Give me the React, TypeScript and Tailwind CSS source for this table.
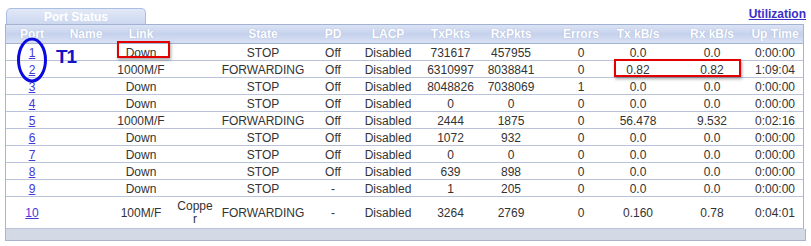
import React from "react";

type Row = {
  port: string;
  link: string;
  media?: boolean;
  state: string;
  pd: string;
  tx: string;
  rx: string;
  err: string;
  txk: string;
  rxk: string;
  up: string;
};

const rows: Row[] = [
  { port: "1", link: "Down", state: "STOP", pd: "Off", tx: "731617", rx: "457955", err: "0", txk: "0.0", rxk: "0.0", up: "0:00:00" },
  { port: "2", link: "1000M/F", state: "FORWARDING", pd: "Off", tx: "6310997", rx: "8038841", err: "0", txk: "0.82", rxk: "0.82", up: "1:09:04" },
  { port: "3", link: "Down", state: "STOP", pd: "Off", tx: "8048826", rx: "7038069", err: "1", txk: "0.0", rxk: "0.0", up: "0:00:00" },
  { port: "4", link: "Down", state: "STOP", pd: "Off", tx: "0", rx: "0", err: "0", txk: "0.0", rxk: "0.0", up: "0:00:00" },
  { port: "5", link: "1000M/F", state: "FORWARDING", pd: "Off", tx: "2444", rx: "1875", err: "0", txk: "56.478", rxk: "9.532", up: "0:02:16" },
  { port: "6", link: "Down", state: "STOP", pd: "Off", tx: "1072", rx: "932", err: "0", txk: "0.0", rxk: "0.0", up: "0:00:00" },
  { port: "7", link: "Down", state: "STOP", pd: "Off", tx: "0", rx: "0", err: "0", txk: "0.0", rxk: "0.0", up: "0:00:00" },
  { port: "8", link: "Down", state: "STOP", pd: "Off", tx: "639", rx: "898", err: "0", txk: "0.0", rxk: "0.0", up: "0:00:00" },
  { port: "9", link: "Down", state: "STOP", pd: "-", tx: "1", rx: "205", err: "0", txk: "0.0", rxk: "0.0", up: "0:00:00" },
  { port: "10", link: "100M/F", media: true, state: "FORWARDING", pd: "-", tx: "3264", rx: "2769", err: "0", txk: "0.160", rxk: "0.78", up: "0:04:01" },
];

const grid =
  "grid grid-cols-[52px_56px_54px_60px_70px_62px_60px_61px_65px_64px_65px_69px_59px]";

const cell = "flex items-center justify-center whitespace-nowrap";

export default function App() {
  return (
    <div
      className="relative w-[811px] h-[246px] bg-white text-[12px] text-[#333333]"
      style={{ fontFamily: '"Liberation Sans", Arial, sans-serif' }}
    >
      {/* top strip */}
      <div className="flex h-[24px] items-start justify-between pl-[6px] pr-[5px]">
        <div className="mt-[8px] flex h-[16px] w-[140px] items-center justify-center rounded-t-[5px] border border-b-0 border-[#aabde2] bg-gradient-to-b from-[#e2e9f7] to-[#ccd7ef] text-[12px] font-bold leading-none text-white">
          Port Status
        </div>
        <a className="mt-[8px] font-bold leading-[13px] text-[#3b30c6] underline">Utilization</a>
      </div>

      {/* table */}
      <div className="ml-[5px] w-[799px] border-x border-[#a9b4cb]">
        <div
          className={`${grid} h-[20px] border-y border-y-[#a4b2d2] bg-gradient-to-b from-[#dbe3f5] via-[#c6d2ed] to-[#d9e1f4] font-bold text-white`}
          style={{ textShadow: "0 0 1px rgba(120,140,190,0.6)" }}
        >
          <div className={cell}>Port</div>
          <div className={cell}>Name</div>
          <div className={cell}>Link</div>
          <div className={cell}></div>
          <div className={cell}>State</div>
          <div className={`${cell} pl-[8px]`}>PD</div>
          <div className={`${cell} pr-[4px]`}>LACP</div>
          <div className={cell}>TxPkts</div>
          <div className={`${cell} pr-[5px]`}>RxPkts</div>
          <div className={`${cell} pl-[6px]`}>Errors</div>
          <div className={`${cell} pr-[9px]`}>Tx kB/s</div>
          <div className={`${cell} pl-[5px]`}>Rx kB/s</div>
          <div className={`${cell} pl-[3px]`}>Up Time</div>
        </div>
        {rows.map((r) => (
          <div
            key={r.port}
            className={`${grid} ${r.media ? "h-[32px]" : "h-[17px]"} border-b border-[#b9c3da]`}
          >
            <div className={cell}>
              <a className="text-[#4338d8] underline">{r.port}</a>
            </div>
            <div className={cell}></div>
            <div className={cell}>{r.link}</div>
            <div className={`${cell} pr-[6px]`}>
              {r.media ? (
                <div className="flex flex-col items-center leading-[13px]">
                  <span>Coppe</span>
                  <span>r</span>
                </div>
              ) : null}
            </div>
            <div className={cell}>{r.state}</div>
            <div className={`${cell} pl-[8px]`}>{r.pd}</div>
            <div className={`${cell} pr-[4px]`}>Disabled</div>
            <div className={cell}>{r.tx}</div>
            <div className={`${cell} pr-[5px]`}>{r.rx}</div>
            <div className={`${cell} pl-[6px]`}>{r.err}</div>
            <div className={`${cell} pr-[9px]`}>{r.txk}</div>
            <div className={`${cell} pl-[5px]`}>{r.rxk}</div>
            <div className={`${cell} pl-[3px]`}>{r.up}</div>
          </div>
        ))}
      </div>
      <div className="ml-[5px] h-[12px] w-[801px] border border-t-0 border-[#a9b4cb] bg-[#d3d9e5]"></div>

      {/* annotations */}
      <div className="absolute left-[117px] top-[41px] h-[17px] w-[53px] border-2 border-[#e30000] shadow-[1px_2px_3px_rgba(0,0,0,0.35)]"></div>
      <div className="absolute left-[614px] top-[59px] h-[18px] w-[127px] border-2 border-[#e30000] shadow-[1px_2px_3px_rgba(0,0,0,0.35)]"></div>
      <svg className="absolute left-[15px] top-[36px]" width="34" height="48" viewBox="0 0 34 48">
        <ellipse cx="17" cy="24" rx="13.5" ry="21" fill="none" stroke="#0a0ae0" strokeWidth="3" />
      </svg>
      <div className="absolute left-[56px] top-[47px] text-[19px] font-bold leading-[20px] tracking-[-1px] text-[#1414c4]">
        T1
      </div>
    </div>
  );
}
